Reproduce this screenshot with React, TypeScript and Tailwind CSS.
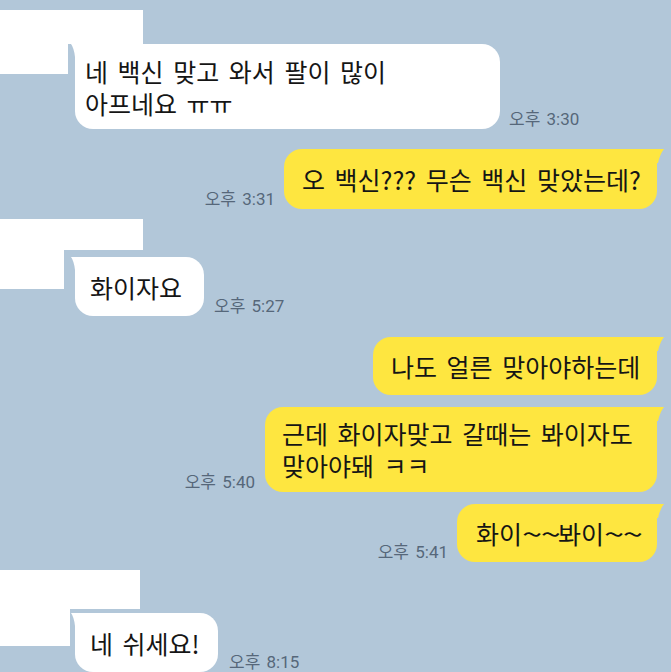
import type { ReactNode } from 'react';

const TEXT_FONT = "font-['Noto_Sans_CJK_KR',sans-serif]";
const TIME_FONT = "font-['Roboto','Noto_Sans_CJK_KR',sans-serif]";

function Bubble({ mine, className, children }: { mine?: boolean; className: string; children: ReactNode }) {
    return (
        <div
            className={`relative shrink-0 whitespace-nowrap rounded-[18px] text-[25px] leading-[32px] text-[#151515] [word-spacing:4px] ${TEXT_FONT} ${mine ? 'rounded-tr-none bg-[#fee640]' : 'rounded-tl-none bg-white'
                } ${className}`}
        >
            {/* Tail */}
            {mine ? (
                <svg className="absolute -right-[7px] top-0" width="13" height="14" viewBox="0 0 13 14">
                    <path d="M0 0 H13 Q9 5 7 14 H0 Z" fill="#fee640" />
                </svg>
            ) : (
                <svg className="absolute -left-[4px] -top-[2px]" width="12" height="15" viewBox="0 0 12 15">
                    <path d="M12 2 H0 Q3 6 4 15 H12 Z" fill="#ffffff" />
                </svg>
            )}
            {children}
        </div>
    );
}

function Time({ children }: { children: ReactNode }) {
    return (
        <span className={`mb-[1px] shrink-0 whitespace-nowrap text-[17px] leading-[17px] text-[#56677a] [word-spacing:2px] ${TIME_FONT}`}>
            {children}
        </span>
    );
}

// wide wavy tildes, as the phone font draws them
function Tildes() {
    return <span className="inline-block w-[36px] origin-left scale-x-[1.45] tracking-[-1px]">~~</span>;
}

export default function App() {
    return (
        <div className="flex h-[672px] w-full flex-col overflow-hidden bg-[#b2c7d9] pt-[10px]">
            {/* Incoming 1 */}
            <div className="h-[35px] w-[143px] bg-white" />
            <div className="flex items-start">
                <div className="h-[30px] w-[68px] bg-white" />
                <div className="ml-[7px] flex items-end gap-[9px]">
                    <Bubble className="w-[425px] pb-[10px] pl-[10px] pt-[11px]">
                        네 백신 맞고 와서 팔이 많이
                        <br />
                        아프네요 ㅠㅠ
                    </Bubble>
                    <Time>오후 3:30</Time>
                </div>
            </div>

            {/* Mine */}
            <div className="mt-[20px] flex items-end justify-end gap-[9px] pr-[14px]">
                <Time>오후 3:31</Time>
                <Bubble mine className="w-[373px] py-[14px] pl-[18px]">
                    오 백신??? 무슨 백신 맞았는데?
                </Bubble>
            </div>

            {/* Incoming 2 */}
            <div className="mt-[10px] h-[33px] w-[143px] bg-white" />
            <div className="flex items-start">
                <div className="h-[39px] w-[64px] bg-white" />
                <div className="ml-[11px] mt-[7px] flex items-end gap-[10px]">
                    <Bubble className="w-[129px] pb-[13px] pl-[15px] pt-[14px]">화이자요</Bubble>
                    <Time>오후 5:27</Time>
                </div>
            </div>

            <div className="mt-[21px] flex items-end justify-end gap-[9px] pr-[14px]">
                <Bubble mine className="w-[284px] py-[13px] pl-[18px]">
                    나도 얼른 맞아야하는데
                </Bubble>
            </div>

            <div className="mt-[12px] flex items-end justify-end gap-[10px] pr-[14px]">
                <Time>오후 5:40</Time>
                <Bubble mine className="w-[392px] pb-[11px] pl-[17px] pt-[10px]">
                    근데 화이자맞고 갈때는 봐이자도
                    <br />
                    맞아야돼 ㅋㅋ
                </Bubble>
            </div>

            <div className="mt-[12px] flex items-end justify-end gap-[9px] pr-[14px]">
                <Time>오후 5:41</Time>
                <Bubble mine className="w-[200px] py-[13px] pl-[19px]">
                    화이<Tildes />봐이<Tildes />
                </Bubble>
            </div>

            {/* Incoming 3 */}
            <div className="mt-[8px] h-[40px] w-[140px] bg-white" />
            <div className="flex items-start">
                <div className="h-[37px] w-[70px] bg-white" />
                <div className="ml-[5px] mt-[4px] flex items-end gap-[11px]">
                    <Bubble className="w-[143px] pb-[13px] pl-[15px] pt-[14px]">네 쉬세요!</Bubble>
                    <Time>오후 8:15</Time>
                </div>
            </div>
        </div>
    );
}
